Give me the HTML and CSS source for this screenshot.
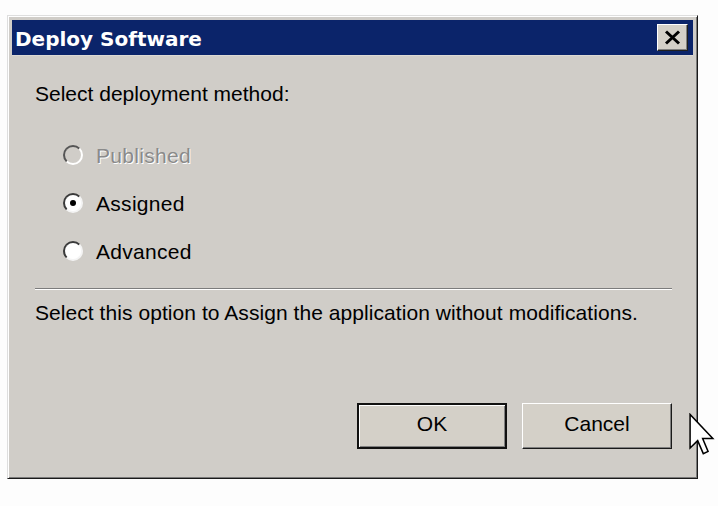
FILE: index.html
```html
<!DOCTYPE html>
<html>
<head>
<meta charset="utf-8">
<title>Deploy Software</title>
<link rel="stylesheet" href="styles.css">
</head>
<body>
<div class="dialog">
  <div class="titlebar">
    <span class="title">Deploy Software</span>
    <button class="close" aria-label="Close">
      <svg width="17" height="15" viewBox="0 0 17 15"><path d="M2 1.5 L15 13.5 M15 1.5 L2 13.5" stroke="#000" stroke-width="3" fill="none"/></svg>
    </button>
  </div>
  <div class="content">
    <div class="heading">Select deployment method:</div>
    <div class="options">
      <label class="option disabled"><span class="radio"></span><span class="label">Published</span></label>
      <label class="option"><span class="radio checked"></span><span class="label">Assigned</span></label>
      <label class="option"><span class="radio"></span><span class="label">Advanced</span></label>
    </div>
    <div class="separator"></div>
    <div class="desc">Select this option to Assign the application without modifications.</div>
    <div class="buttons">
      <button class="btn default">OK</button>
      <button class="btn">Cancel</button>
    </div>
  </div>
</div>
<svg class="cursor" width="26" height="44" viewBox="0 0 12 20"><path d="M0.5 0.5 L0.5 16 L4 12.6 L6.6 18.6 L8.8 17.6 L6.3 11.6 L11 11.6 Z" fill="#fff" stroke="#000" stroke-width="0.7" stroke-linejoin="miter"/></svg>
</body>
</html>
```
FILE: styles.css
```css
html, body {
  margin: 0;
  padding: 0;
}
body {
  background: #fdfdfd;
  width: 718px;
  height: 506px;
  position: relative;
  overflow: hidden;
  font-family: "Liberation Sans", Arial, sans-serif;
}
.dialog {
  margin: 15px 0 0 7px;
  width: 691px;
  height: 464px;
  box-sizing: border-box;
  border: 1px solid;
  border-color: #dedede #1a1a1a #1a1a1a #dedede;
  box-shadow: inset 1px 1px #ffffff, inset -1px -1px #7a7a7a;
  padding: 4px;
  background: #d0cdc8;
  display: flex;
  flex-direction: column;
}
.titlebar {
  height: 35px;
  background: #0b246a;
  display: flex;
  align-items: center;
  justify-content: space-between;
  padding: 0 5px 0 3px;
  flex-shrink: 0;
  border-bottom: 1px solid #dcd9d4;
}
.title {
  font-family: "DejaVu Sans", Verdana, sans-serif;
  font-weight: bold;
  font-size: 20px;
  color: #fff;
  padding-top: 2px;
}
.close {
  width: 31px;
  height: 27px;
  box-sizing: border-box;
  padding: 0;
  margin: 0;
  background: #d4d0c8;
  border: 1px solid;
  border-color: #fff #202020 #202020 #fff;
  box-shadow: inset -1px -1px #808080;
  display: flex;
  align-items: center;
  justify-content: center;
}
.close svg {
  display: block;
}
.content {
  flex: 1;
  display: flex;
  flex-direction: column;
  padding: 26px 21px 25px 23px;
  font-size: 21px;
  line-height: 24px;
  color: #000;
}
.heading {
  height: 24px;
}
.options {
  margin-top: 38px;
  display: flex;
  flex-direction: column;
  gap: 24px;
}
.option {
  display: flex;
  align-items: center;
  height: 24px;
  padding-left: 28px;
}
.label {
  letter-spacing: 0.3px;
}
.radio {
  width: 20px;
  height: 20px;
  box-sizing: border-box;
  border-radius: 50%;
  border: 2px solid;
  border-color: #3a3a3a #f4f4f4 #f4f4f4 #3a3a3a;
  background: #fff;
  margin-right: 13px;
  margin-top: -2px;
  position: relative;
  flex-shrink: 0;
}
.radio.checked::after {
  content: "";
  position: absolute;
  left: 5px;
  top: 5px;
  width: 6px;
  height: 6px;
  border-radius: 50%;
  background: #000;
}
.option.disabled .radio {
  background: #d0cdc8;
  border-color: #555 #fff #fff #555;
}
.option.disabled .label {
  color: #8a8a8a;
  text-shadow: 1px 1px #fff;
}
.separator {
  margin-top: 24px;
  height: 1px;
  background: #7c7c7c;
  border-bottom: 1px solid #fff;
}
.desc {
  margin-top: 11px;
  letter-spacing: 0.06px;
}
.buttons {
  margin-top: auto;
  display: flex;
  justify-content: flex-end;
  gap: 15px;
}
.btn {
  width: 150px;
  height: 46px;
  box-sizing: border-box;
  font-family: "Liberation Sans", Arial, sans-serif;
  font-size: 21px;
  color: #000;
  background: #d4d0c8;
  border: 1px solid;
  border-color: #fff #1a1a1a #1a1a1a #fff;
  box-shadow: inset -1px -1px #808080;
  padding: 0 0 5px 0;
  margin: 0;
}
.btn.default {
  border: 2px solid #111;
  box-shadow: inset 1px 1px #fff, inset -1px -1px #808080;
}
.cursor {
  position: absolute;
  left: 689px;
  top: 413px;
}
```
